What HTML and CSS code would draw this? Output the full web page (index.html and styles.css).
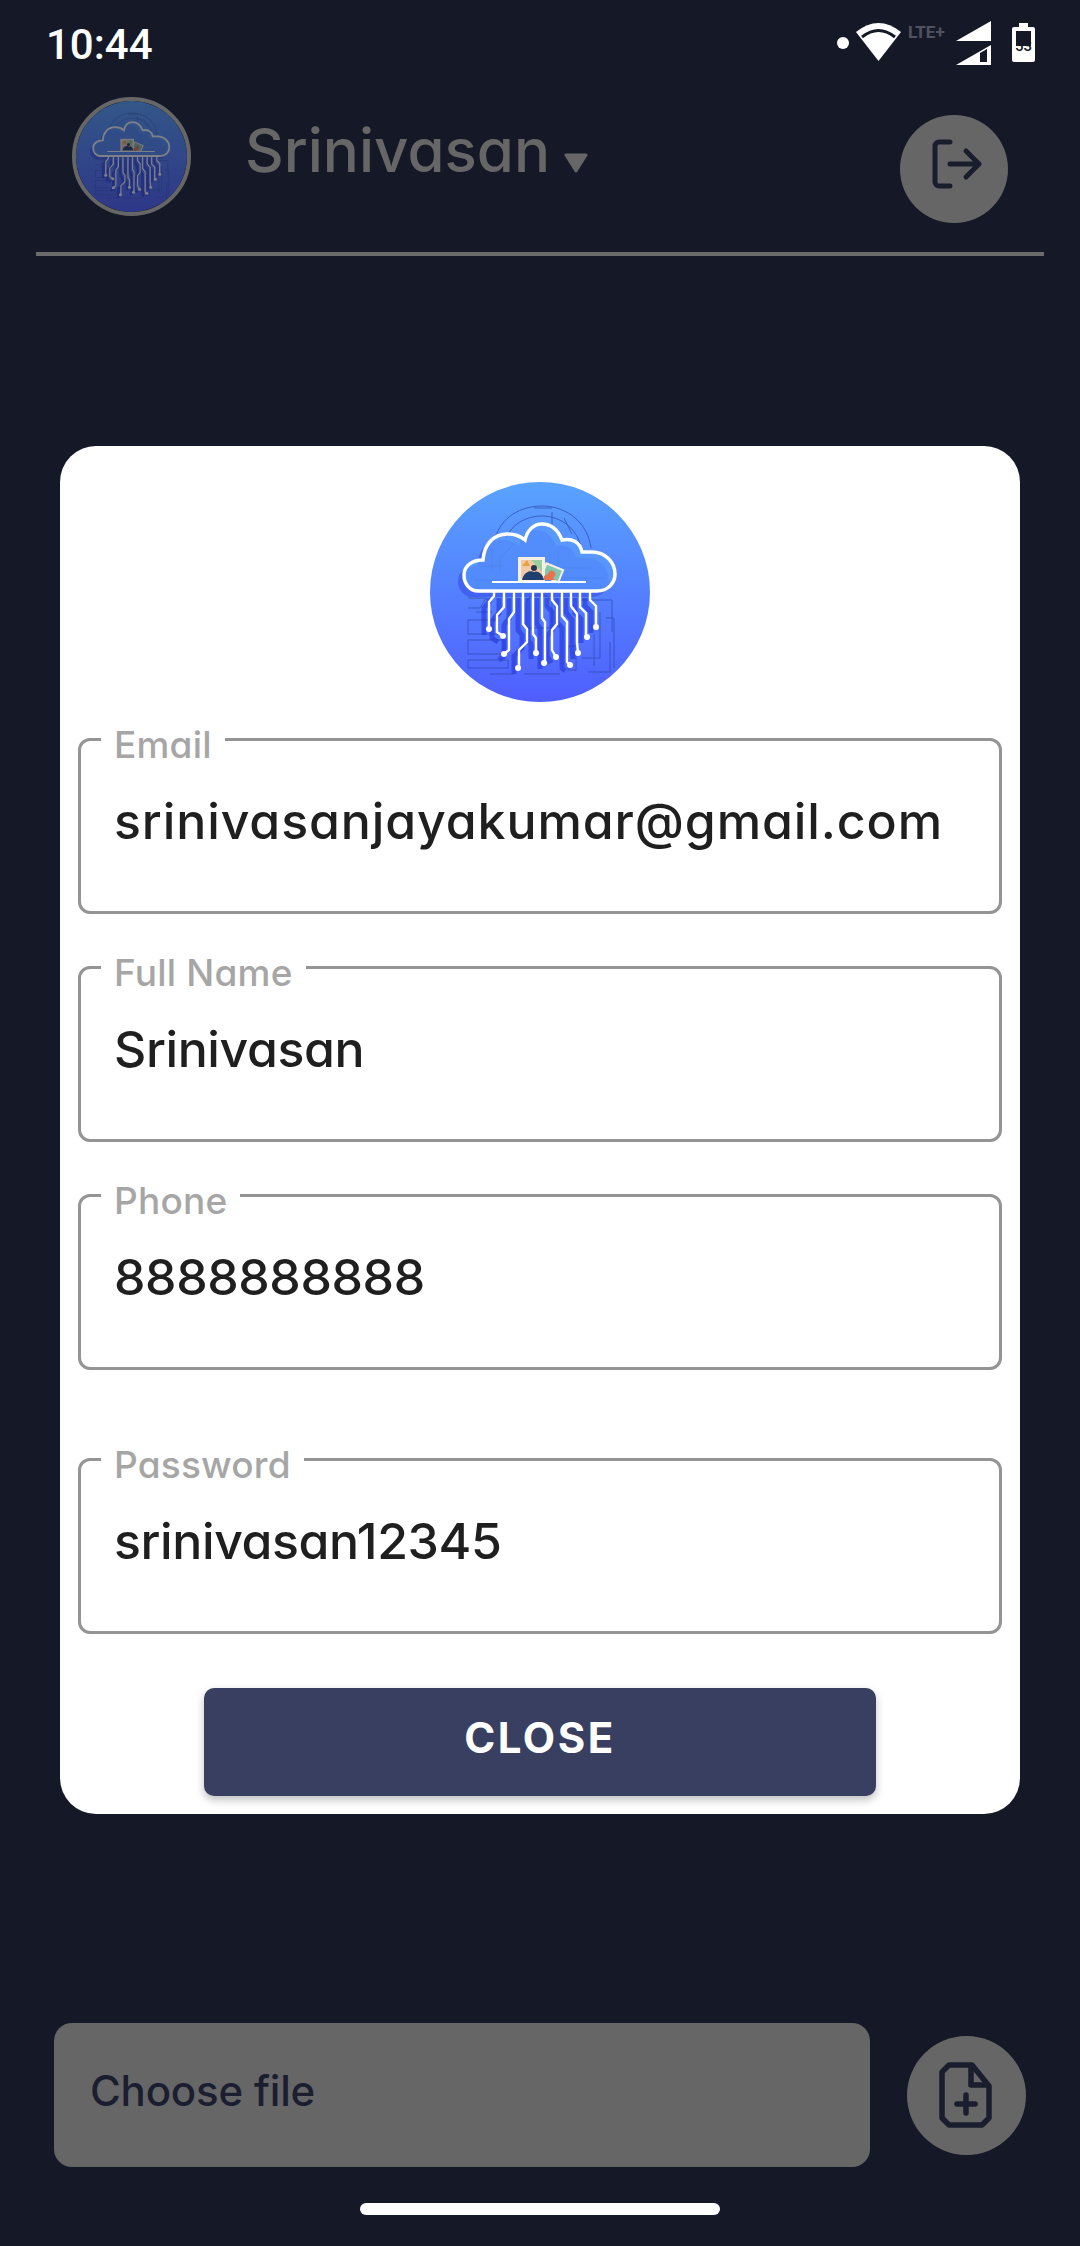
FILE: index.html
```html
<!DOCTYPE html>
<html>

<head>
    <title>Profile</title>
    <meta charset="UTF-8" />
    <link rel="stylesheet" href="styles.css">
</head>

<body>
    <svg class="defs" aria-hidden="true">
        <defs>
            <linearGradient id="logoBg" x1="0" y1="0" x2="0" y2="1">
                <stop offset="0" stop-color="#59a3ff" />
                <stop offset="1" stop-color="#4f5eff" />
            </linearGradient>
            <g id="wires">
                <path d="M64 110V114L59 120V147" />
                <path d="M74 110V125L67 133V150L73 154" />
                <path d="M84 110V130L79 137V168L74 172" />
                <path d="M93 110V142L97 147V160L89 168V186" />
                <path d="M103 110V152L106 156V171" />
                <path d="M112 110V136L115 140V181" />
                <path d="M122 110V118L127 124V142L122 148V168L126 175" />
                <path d="M132 110V134L137 140V180L140 183" />
                <path d="M141 110V124L147 132V160L148 171" />
                <path d="M150 110V125L156 131V155" />
                <path d="M160 110V118L166 124V145" />
            </g>
            <path id="cloud" d="M48 109H167C178 109 185 101 185 92C185 80 175 70 162 70L152 70C150 60 142 56 132 58C128 48 121 42 112 42C103 42 97 49 95 58C88 52 82 52 78 52C62 52 54 64 53 78C42 78 34 84 34 93C34 102 40 109 48 109Z" />
            <symbol id="logo" viewBox="0 0 220 220">
                <circle cx="110" cy="110" r="110" fill="url(#logoBg)" />
                <!-- faint board behind the cloud -->
                <g fill="none" stroke="#2f4aa8" stroke-width="1" opacity=".7">
                    <path d="M64 60C70 34 92 24 112 24C138 24 158 42 161 66" />
                    <path d="M76 56C82 42 96 34 112 34C130 34 146 46 150 62" />
                    <path d="M122 30V42M134 36L142 52M84 62L70 76V92M72 84H50M62 66V90M104 26H122" />
                    <path d="M128 70V86H160M44 98H80M132 96H176" />
                    <rect x="38" y="138" width="30" height="14" />
                    <rect x="38" y="158" width="36" height="14" />
                    <rect x="38" y="178" width="40" height="8" />
                    <path d="M38 116H56L50 126H38M150 118H182V150M170 130V176H152M46 130H62M176 136H184V186" />
                    <path d="M96 122C96 110 122 110 122 122V146H96Z" />
                    <rect x="138" y="164" width="8" height="24" />
                    <path d="M158 190H180V160M94 192H130M60 192H84M164 152V184" />
                </g>
                <!-- long shadow of the wires -->
                <g fill="none" stroke="#2436dc" stroke-width="5" opacity=".6" transform="translate(-5 6)">
                    <use href="#wires" />
                </g>
                <use href="#cloud" fill="#2c3de2" opacity=".45" transform="translate(-6 6)" />
                <use href="#cloud" fill="#5a9bff" fill-opacity=".7" stroke="#fff" stroke-width="3.500" />
                <g fill="none" stroke="#fff" stroke-width="2.400">
                    <use href="#wires" />
                </g>
                <g fill="#fff">
                    <circle cx="59" cy="147" r="3" />
                    <circle cx="73" cy="154" r="3" />
                    <circle cx="74" cy="172" r="3" />
                    <circle cx="88" cy="186" r="3" />
                    <circle cx="106" cy="171" r="3" />
                    <circle cx="114" cy="181" r="3" />
                    <circle cx="126" cy="175" r="3" />
                    <circle cx="140" cy="183" r="3" />
                    <circle cx="148" cy="171" r="3" />
                    <circle cx="157" cy="155" r="3" />
                    <circle cx="166" cy="145" r="3" />
                </g>
                <!-- photos on the shelf -->
                <g transform="rotate(22 124 92)">
                    <rect x="112" y="84" width="20" height="15" fill="#f4efe2" />
                    <rect x="114" y="86" width="16" height="11" fill="#7fc7ae" />
                    <circle cx="122" cy="93" r="3.500" fill="#e8734f" />
                </g>
                <rect x="88" y="75" width="27" height="25" fill="#f5f0e3" />
                <path d="M91 78H112V97H91Z" fill="#f2c9a8" />
                <path d="M101 78H112V90Z" fill="#9ccf9f" />
                <path d="M92 98C94 90 100 88 104 90C108 88 113 92 114 98Z" fill="#1f3f6e" />
                <circle cx="104" cy="86" r="3" fill="#27324f" />
                <path d="M92 84L97 78L100 84Z" fill="#e8a13a" />
                <path d="M114 94L120 91L125 98H114Z" fill="#e8734f" />
                <path d="M62 100H156" stroke="#fff" stroke-width="2" />
            </symbol>
        </defs>
    </svg>

    <div class="screen">
        <div class="statusbar">
            <span class="clock">10:44</span>
            <svg class="status-icons" viewBox="835 15 205 55" width="205" height="55">
                <circle cx="843" cy="43" r="6" fill="#fff" />
                <path d="M856 32Q878.500 14 901 32L878.500 61Z" fill="#fff" />
                <path d="M862 37Q878.500 24 895 37" fill="none" stroke="#151927" stroke-width="3" />
                <text class="lte" x="908" y="38">LTE+</text>
                <path d="M956 41L991 21V41Z" fill="#fff" />
                <path d="M956 65L991 45V65Z" fill="#fff" />
                <path d="M980 53L987 49V62H980Z" fill="#151927" />
                <path d="M1019 23H1028V27H1033Q1035 27 1035 29V60Q1035 62 1033 62H1014Q1012 62 1012 60V29Q1012 27 1014 27H1019Z" fill="#fff" />
                <path d="M1016 31H1031V46H1016Z" fill="#151927" />
                <text class="batt" x="1023.500" y="51">53</text>
            </svg>
        </div>

        <div class="header">
            <div class="avatar">
                <svg class="avatar-logo"><use href="#logo" /></svg>
            </div>
            <div class="username">Srinivasan</div>
            <svg class="caret" viewBox="0 0 24 20" width="24" height="20">
                <path d="M2 2H22L12 18Z" fill="#666" stroke="#666" stroke-width="3" stroke-linejoin="round" />
            </svg>
            <div class="logout">
                <svg viewBox="0 0 108 108" width="108" height="108" fill="none" stroke="#191d2e" stroke-width="5" stroke-linecap="round" stroke-linejoin="round">
                    <path d="M50 27H39A4 4 0 0 0 35 31V67A4 4 0 0 0 39 71H50" />
                    <path d="M50 49H79M66 36L79 49L66 62" />
                </svg>
            </div>
        </div>

        <div class="card">
            <svg class="card-logo"><use href="#logo" /></svg>
            <div class="field">
                <label class="field-label">Email</label>
                <div class="field-value value-wide">srinivasanjayakumar@gmail.com</div>
            </div>
            <div class="field">
                <label class="field-label">Full Name</label>
                <div class="field-value">Srinivasan</div>
            </div>
            <div class="field field-gap">
                <label class="field-label">Phone</label>
                <div class="field-value">8888888888</div>
            </div>
            <div class="field field-last">
                <label class="field-label">Password</label>
                <div class="field-value">srinivasan12345</div>
            </div>
            <button class="close-btn">CLOSE</button>
        </div>

        <div class="footer">
            <div class="file-input">Choose file</div>
            <div class="file-btn">
                <svg viewBox="0 0 119 119" width="119" height="119" fill="none" stroke="#191d2e" stroke-width="5.500" stroke-linejoin="round">
                    <path d="M42 29H65L82 50V82L75 89H42L35 82V36Z" />
                    <path d="M64 29V49H82" />
                    <path d="M50 68H68M59 59V77" stroke-linecap="round" />
                </svg>
            </div>
        </div>
        <div class="homebar"></div>
    </div>
</body>

</html>
```

FILE: styles.css
```css
* {
    box-sizing: border-box;
}

html,
body {
    margin: 0;
    padding: 0;
}

body {
    background: #151927;
    font-family: Inter, "Open Sans", sans-serif;
    font-feature-settings: "cv11";
}

.defs {
    display: block;
    width: 0;
    height: 0;
    overflow: hidden;
}

.screen {
    width: 1080px;
    height: 2246px;
    overflow: hidden;
    display: flex;
    flex-direction: column;
}

/* status bar */
.statusbar {
    height: 90px;
    padding: 15px 40px 0 46px;
    display: flex;
    justify-content: space-between;
    align-items: flex-start;
}

.clock {
    font-family: Roboto, sans-serif;
    font-size: 42px;
    font-weight: 500;
    line-height: 60px;
    color: #fff;
    font-feature-settings: normal;
}

.status-icons {
    display: block;
}

.lte {
    font-family: Roboto, sans-serif;
    font-size: 17px;
    font-weight: 700;
    fill: #50535f;
}

.batt {
    font-family: Roboto, sans-serif;
    font-size: 15px;
    font-weight: 500;
    fill: #151927;
    text-anchor: middle;
}

/* header */
.header {
    width: 1008px;
    height: 166px;
    margin-left: 36px;
    padding: 7px 36px 0 36px;
    border-bottom: 4px solid #6b6b6b;
    display: flex;
    align-items: flex-start;
}

.avatar {
    width: 119px;
    height: 119px;
    flex: none;
    border: 4px solid #666;
    border-radius: 50%;
    overflow: hidden;
}

.avatar-logo {
    display: block;
    width: 111px;
    height: 111px;
    opacity: .45;
}

.username {
    margin: 15px 0 0 54px;
    font-size: 60px;
    line-height: 76px;
    font-weight: 500;
    color: #666;
}

.caret {
    margin: 56px 0 0 14px;
}

.logout {
    margin: 18px 0 0 auto;
    width: 108px;
    height: 108px;
    border-radius: 50%;
    background: #666;
}

.logout svg,
.file-btn svg {
    display: block;
}

/* modal card */
.card {
    width: 960px;
    height: 1368px;
    margin: 190px 0 0 60px;
    padding: 36px 18px 0;
    background: #fff;
    border-radius: 36px;
    display: flex;
    flex-direction: column;
    align-items: center;
}

.card-logo {
    display: block;
    width: 220px;
    height: 220px;
    flex: none;
    margin-bottom: 36px;
}

.field {
    position: relative;
    width: 924px;
    height: 176px;
    flex: none;
    margin-bottom: 52px;
    padding: 48px 33px 0;
    border: 3px solid #949494;
    border-radius: 12px;
}

.field-gap {
    margin-bottom: 88px;
}

.field-last {
    margin-bottom: 54px;
}

.field-label {
    position: absolute;
    left: 20px;
    top: -18px;
    padding: 0 13px;
    background: #fff;
    color: #a6a6a6;
    font-size: 37px;
    line-height: 44px;
    font-weight: 500;
    letter-spacing: .2px;
}

.field-value {
    font-size: 50px;
    line-height: 64px;
    font-weight: 500;
    color: #1f1f1f;
    white-space: nowrap;
    letter-spacing: -.4px;
}

.value-wide {
    letter-spacing: .9px;
}

.close-btn {
    width: 672px;
    height: 108px;
    flex: none;
    padding: 0 0 10px;
    border: 0;
    border-radius: 10px;
    background: #383f61;
    box-shadow: 0 4px 8px rgba(0, 0, 0, .25);
    color: #fff;
    font-family: inherit;
    font-feature-settings: inherit;
    font-size: 42px;
    font-weight: 700;
    letter-spacing: 2.500px;
}

/* bottom row */
.footer {
    margin: 209px 0 0 54px;
    display: flex;
    align-items: center;
}

.file-input {
    width: 816px;
    height: 144px;
    padding: 0 36px 10px;
    border-radius: 18px;
    background: #666;
    color: #1b1e30;
    font-size: 42px;
    font-weight: 500;
    letter-spacing: -.2px;
    display: flex;
    align-items: center;
}

.file-btn {
    width: 119px;
    height: 119px;
    margin-left: 37px;
    border-radius: 50%;
    background: #666;
}

.homebar {
    width: 360px;
    height: 12px;
    margin: 36px 0 0 360px;
    border-radius: 6px;
    background: #fff;
}
```
